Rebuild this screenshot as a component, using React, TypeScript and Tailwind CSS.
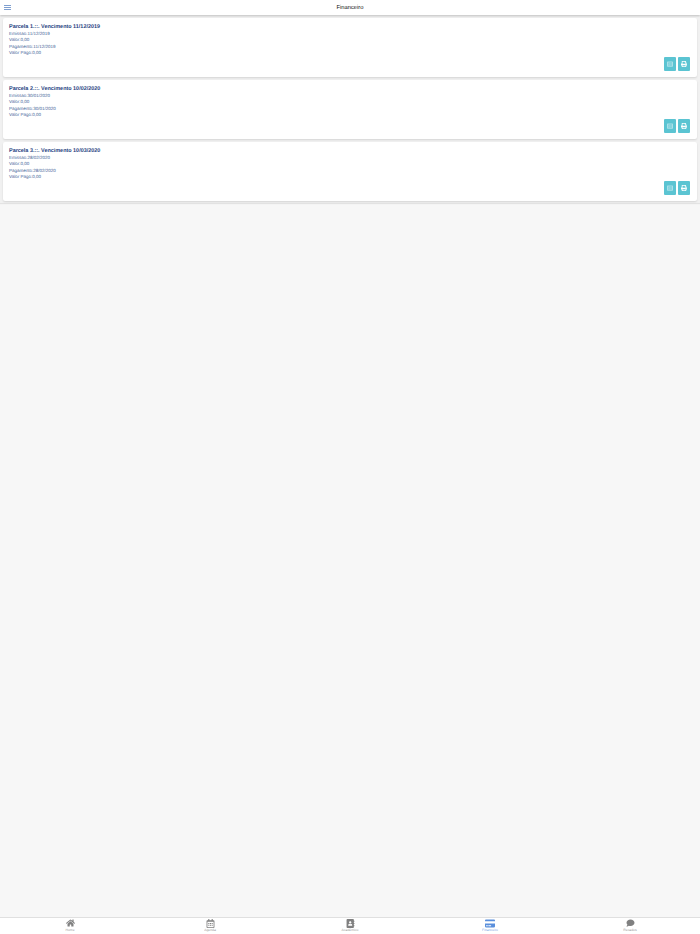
import React from 'react';
import { FaHome, FaRegCalendarAlt, FaAddressBook, FaCreditCard, FaComment, FaPrint, FaListAlt } from 'react-icons/fa';

const parcelas = [
  { numero: 1, vencimento: '11/12/2019', emissao: '11/12/2019', pagamento: '11/12/2019' },
  { numero: 2, vencimento: '10/02/2020', emissao: '30/01/2020', pagamento: '30/01/2020' },
  { numero: 3, vencimento: '10/03/2020', emissao: '28/02/2020', pagamento: '28/02/2020' },
];

const tabs = [
  { label: 'Home', icon: FaHome, size: 'w-[9px] h-[8px]' },
  { label: 'Agenda', icon: FaRegCalendarAlt, size: 'w-[9px] h-[9px]' },
  { label: 'Acadêmico', icon: FaAddressBook, size: 'w-[9px] h-[9px]' },
  { label: 'Financeiro', icon: FaCreditCard, size: 'w-[10px] h-[9px]', active: true },
  { label: 'Recados', icon: FaComment, size: 'w-[9px] h-[8px]' },
];

export default function App() {
  return (
    <div className="h-[934px] flex flex-col bg-[#f7f7f7] font-['Liberation_Sans',Arial,sans-serif] [text-rendering:geometricPrecision] overflow-hidden">
      <header className="h-[15px] shrink-0 relative flex items-center justify-center bg-white shadow-[0_1px_2px_rgba(0,0,0,0.2)] z-10">
        <button className="absolute left-[4px] top-[5px] w-[7px] flex flex-col gap-[1.2px]">
          <span className="block h-px w-[7px] bg-[#7f9fd0]" />
          <span className="block h-px w-[7px] bg-[#7f9fd0]" />
          <span className="block h-px w-[7px] bg-[#7f9fd0]" />
        </button>
        <h1 className="text-[5.8px] leading-none text-[#111] pt-[2px]">Financeiro</h1>
      </header>

      <main className="h-[188px] shrink-0 bg-[#f1f1f1] px-[3px] pt-[3px] flex flex-col gap-[3px] shadow-[0_1px_1px_rgba(0,0,0,0.08)]">
        {parcelas.map((p) => (
          <div key={p.numero} className="h-[59px] bg-white rounded-[2px] shadow-[0_1px_2px_rgba(0,0,0,0.12)] pl-[6px] pr-[7px] pt-[5px] flex flex-col">
            <h2 className="text-[5.45px] leading-[7px] font-bold text-[#1f3f7f] pt-[0.5px]">
              Parcela {p.numero}.::. Vencimento {p.vencimento}
            </h2>
            <div className="text-[4.5px] leading-[6.3px] text-[#3f5f98] mt-[0.7px]">
              <p>Emissao:{p.emissao}</p>
              <p>Valor:0,00</p>
              <p>Pagamento:{p.pagamento}</p>
              <p>Valor Pago:0,00</p>
            </div>
            <div className="flex justify-end gap-[1.5px] mt-[0.8px]">
              <button className="w-[12.5px] h-[14px] rounded-[1px] bg-[#5bc4d2] flex items-center justify-center">
                <FaListAlt className="w-[6px] h-[6px] text-[#a9e0e8]" />
              </button>
              <button className="w-[12.5px] h-[14px] rounded-[1px] bg-[#5bc4d2] flex items-center justify-center">
                <FaPrint className="w-[6px] h-[6px] text-white" />
              </button>
            </div>
          </div>
        ))}
      </main>

      <div className="flex-1" />

      <nav className="h-[17px] shrink-0 bg-white border-t border-[#e0e0e0] grid grid-cols-5">
        {tabs.map((t) => {
          const Icon = t.icon;
          return (
            <div key={t.label} className={`flex flex-col items-center ${t.active ? 'text-[#5a8fdc]' : 'text-[#808080]'}`}>
              <div className="h-[10px] flex items-center justify-center">
                <Icon className={t.size} />
              </div>
              <span className="text-[3.4px] leading-[4px] opacity-80">{t.label}</span>
            </div>
          );
        })}
      </nav>
    </div>
  );
}
